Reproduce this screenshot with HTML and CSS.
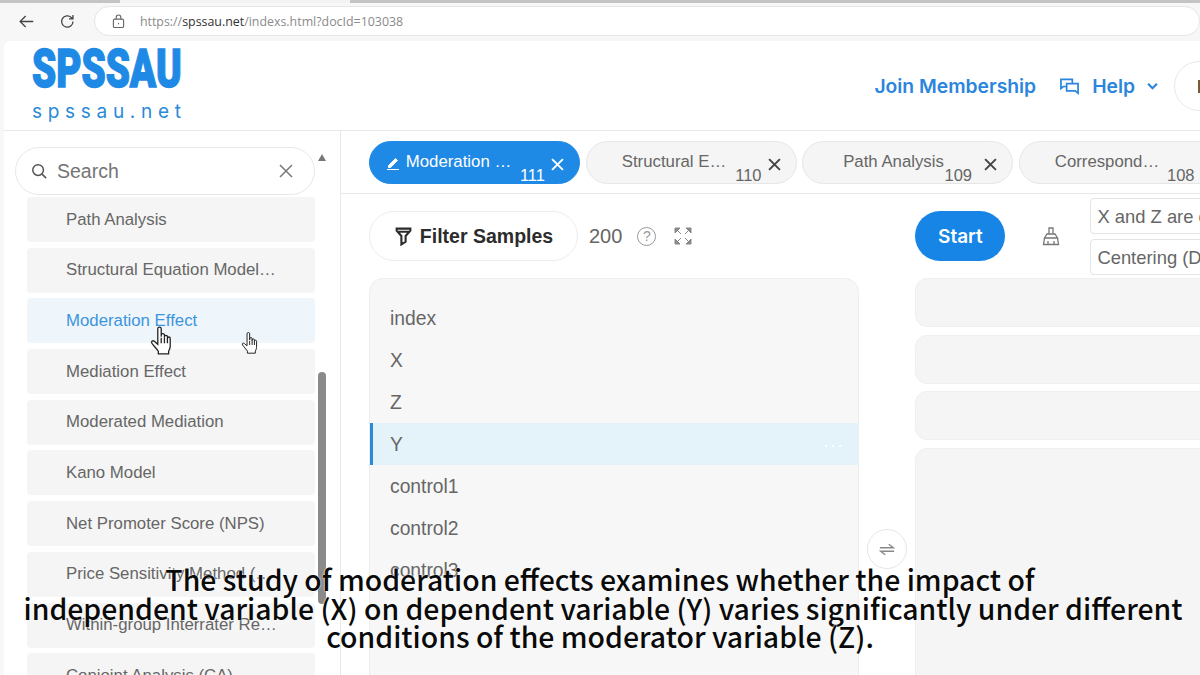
FILE: index.html
```html
<!DOCTYPE html>
<html lang="en">
  <head>
    <meta charset="UTF-8" />
    <title>SPSSAU</title>
    <link rel="stylesheet" href="styles.css">
  </head>
  <body>
    <div class="screen">
      <div class="browser">
        <div class="tabstrip">
          <span class="tab-edge edge-left"></span>
          <span class="tab-edge edge-right"></span>
        </div>
        <div class="navbar">
          <svg class="nav-icon back" viewBox="0 0 20 20"><path d="M18 10H3M9 3.500 2.500 10 9 16.500"/></svg>
          <svg class="nav-icon reload" viewBox="0 0 20 20"><path d="M16.500 10a6.700 6.700 0 1 1-2-4.800L16.500 7M16.500 2.300V7h-4.700"/></svg>
          <div class="address">
            <svg class="lock" viewBox="0 0 14 16"><rect x="1.500" y="5.500" width="11" height="9" rx="1.500"/><path d="M4.500 5.500V3.500a2.500 2.500 0 0 1 5 0v2M7 9.500v1.500"/></svg>
            <span class="url">https://<b>spssau.net</b>/indexs.html?docId=103038</span>
          </div>
        </div>
      </div>

      <div class="page">
        <header class="header">
          <div class="logo">
            <div class="logo-main">SPSSAU</div>
            <div class="logo-sub">spssau.net</div>
          </div>
          <div class="header-links">
            <span class="join">Join Membership</span>
            <svg class="help-icon" viewBox="0 0 22 20"><path d="M14 7V2.500H2V12l2.500-2H8M8 7h12v10l-3-2.500H8z"/></svg>
            <span class="help">Help</span>
            <svg class="chev" viewBox="0 0 10 7"><path d="M1 1.500 5 5.500 9 1.500"/></svg>
            <span class="user-pill"><span class="user-mark"></span></span>
          </div>
        </header>

        <div class="body">
          <aside class="sidebar">
            <div class="search-row">
              <div class="search">
                <svg class="search-icon" viewBox="0 0 18 18"><circle cx="8" cy="8" r="6"/><path d="M12.500 12.500 17 17"/></svg>
                <span class="search-text">Search</span>
                <svg class="search-x" viewBox="0 0 14 14"><path d="M1 1 13 13M13 1 1 13"/></svg>
              </div>
              <span class="scroll-up"></span>
            </div>
            <div class="menu-wrap">
              <ul class="menu">
                <li>Path Analysis</li>
                <li>Structural Equation Model…</li>
                <li class="active">Moderation Effect</li>
                <li>Mediation Effect</li>
                <li>Moderated Mediation</li>
                <li>Kano Model</li>
                <li>Net Promoter Score (NPS)</li>
                <li>Price Sensitivity Method (…</li>
                <li>Within-group Interrater Re…</li>
                <li>Conjoint Analysis (CA)</li>
              </ul>
              <span class="scroll-thumb"></span>
              <svg class="hand hand-big" viewBox="0 0 20 28"><path d="M7 14V3.500a1.600 1.600 0 0 1 3.200 0V11l0-1.500a1.500 1.500 0 0 1 3 0V12l0-1a1.400 1.400 0 0 1 2.800 0v2l0-.5a1.300 1.300 0 0 1 2.600 0V20c0 2-1 3-1.500 4.500V27H7.500v-2.500C6 22 3 19.500 1.500 17c-1-1.700.8-3 2.200-1.800L7 18z"/><path d="M10.200 12v5M13.200 12v5M16 13v4"/></svg>
              <svg class="hand hand-small" viewBox="0 0 20 28"><path d="M7 14V3.500a1.600 1.600 0 0 1 3.200 0V11l0-1.500a1.500 1.500 0 0 1 3 0V12l0-1a1.400 1.400 0 0 1 2.800 0v2l0-.5a1.300 1.300 0 0 1 2.600 0V20c0 2-1 3-1.500 4.500V27H7.500v-2.500C6 22 3 19.500 1.500 17c-1-1.700.8-3 2.200-1.800L7 18z"/><path d="M10.200 12v5M13.200 12v5M16 13v4"/></svg>
            </div>
          </aside>

          <main class="main">
            <div class="tabs">
              <div class="tab current">
                <svg class="pen" viewBox="0 0 14 14"><path d="M2.500 9.500 9.500 2.500l2 2-7 7H2.500zM1 13.500h12"/></svg>
                <span class="tab-name">Moderation …</span>
                <span class="tab-num">111</span>
                <svg class="tab-x" viewBox="0 0 12 12"><path d="M1 1 11 11M11 1 1 11"/></svg>
              </div>
              <div class="tab">
                <span class="tab-name">Structural E…</span>
                <span class="tab-num">110</span>
                <svg class="tab-x" viewBox="0 0 12 12"><path d="M1 1 11 11M11 1 1 11"/></svg>
              </div>
              <div class="tab tab-path">
                <span class="tab-name">Path Analysis</span>
                <span class="tab-num">109</span>
                <svg class="tab-x" viewBox="0 0 12 12"><path d="M1 1 11 11M11 1 1 11"/></svg>
              </div>
              <div class="tab">
                <span class="tab-name">Correspond…</span>
                <span class="tab-num">108</span>
                <svg class="tab-x" viewBox="0 0 12 12"><path d="M1 1 11 11M11 1 1 11"/></svg>
              </div>
            </div>

            <div class="toolbar">
              <div class="filter-btn">
                <svg class="funnel" viewBox="0 0 16 18"><path d="M1.500 1.500h13v2L10 8.500V14l-4 2.500v-8L1.500 3.500zM2 4.500h12"/></svg>
                <span>Filter Samples</span>
              </div>
              <span class="count">200</span>
              <span class="question">?</span>
              <svg class="expand" viewBox="0 0 18 18"><path d="M1 1h5l-5 5zM17 1h-5l5 5zM1 17h5l-5-5zM17 17h-5l5-5z"/><path d="M3 3l4 4M15 3l-4 4M3 15l4-4M15 15l-4-4"/></svg>
              <div class="start-btn">Start</div>
              <svg class="brush" viewBox="0 0 18 20"><path d="M7 8V2h4v6M2.500 12 5 8h8l2.500 4zM2.500 12 1.500 18.500h15L15.500 12M6 18.500V15M12 18.500V15"/></svg>
              <div class="selects">
                <div class="select">X and Z are centered</div>
                <div class="select">Centering (Default)</div>
              </div>
            </div>

            <div class="work">
              <div class="vars">
                <div class="var">index</div>
                <div class="var">X</div>
                <div class="var">Z</div>
                <div class="var selected">Y<span class="dots">···</span></div>
                <div class="var">control1</div>
                <div class="var">control2</div>
                <div class="var">control3</div>
              </div>
              <div class="gutter">
                <span class="swap">
                  <svg viewBox="0 0 18 14"><path d="M1 5h15l-5-4M17 9H2l5 4"/></svg>
                </span>
              </div>
              <div class="slots">
                <div class="slot"></div>
                <div class="slot"></div>
                <div class="slot"></div>
                <div class="slot slot-big"></div>
              </div>
            </div>
          </main>
        </div>
      </div>

      <div class="caption">
        The study of moderation effects examines whether the impact of<br>
        <span class="caption-mid">independent variable (X) on dependent variable (Y) varies significantly under different</span><br>
        conditions of the moderator variable (Z).
      </div>
    </div>
  </body>
</html>
```

FILE: styles.css
```css
* {
  padding: 0;
  margin: 0;
  box-sizing: border-box;
}
html,
body {
  width: 1200px;
  height: 675px;
  overflow: hidden;
}
body {
  font-family: "Liberation Sans", Arial, sans-serif;
  color: #666;
  background-color: #f7f7f7;
}
.screen {
  position: relative;
  width: 1200px;
  height: 675px;
  overflow: hidden;
}

/* browser chrome */
.browser {
  height: 41px;
  background-color: #f7f7f7;
}
.tabstrip {
  display: flex;
  gap: 230px;
  height: 3px;
  background-color: #f3f3f3;
  overflow: hidden;
}
.tab-edge {
  display: block;
  flex-shrink: 0;
  height: 3px;
  background-color: #c4c4c4;
}
.edge-left {
  width: 120px;
}
.edge-right {
  width: 850px;
}
.navbar {
  display: flex;
  align-items: center;
  height: 36px;
  padding-left: 18px;
}
.nav-icon {
  width: 17px;
  height: 17px;
  fill: none;
  stroke: #444;
  stroke-width: 1.500;
}
.reload {
  margin-left: 24px;
}
.address {
  display: flex;
  align-items: center;
  width: 1110px;
  height: 30px;
  margin-left: 18px;
  padding-left: 17px;
  background-color: #fff;
  border: 1px solid #e6e6e6;
  border-radius: 15px;
}
.lock {
  width: 13px;
  height: 15px;
  fill: none;
  stroke: #666;
  stroke-width: 1.200;
}
.url {
  margin-left: 15px;
  font-family: "Open Sans", sans-serif;
  font-size: 12.400px;
  color: #8a8a8a;
}
.url b {
  font-weight: 400;
  color: #333;
}

/* page card */
.page {
  margin-left: 4px;
  height: 634px;
  background-color: #fff;
  border-radius: 6px 0 0 0;
}
.header {
  display: flex;
  justify-content: space-between;
  height: 90px;
  border-bottom: 1px solid #e8e8e8;
}
.logo {
  width: 180px;
  padding: 6px 0 0 28px;
  color: #1f8ae6;
}
.logo-main {
  width: 151px;
  height: 44px;
  font-family: Roboto, sans-serif;
  font-weight: 900;
  font-size: 53px;
  line-height: 44px;
  -webkit-text-stroke: 1.500px #1f8ae6;
  transform: scaleX(0.73);
  transform-origin: left center;
  white-space: nowrap;
}
.logo-sub {
  margin-top: 9px;
  font-family: Inter, sans-serif;
  font-size: 19px;
  line-height: 24px;
  letter-spacing: 5.700px;
  color: #2a8ad8;
}
.header-links {
  display: flex;
  align-items: center;
  height: 90px;
  color: #2a86dc;
  font-family: Inter, sans-serif;
  font-weight: 600;
  font-size: 19.300px;
}
.help-icon {
  width: 21px;
  height: 19px;
  margin-left: 23px;
  fill: none;
  stroke: #2a86dc;
  stroke-width: 1.800;
}
.help {
  margin-left: 12px;
}
.chev {
  width: 11px;
  height: 8px;
  margin-left: 12px;
  fill: none;
  stroke: #2a86dc;
  stroke-width: 2;
}
.user-pill {
  display: flex;
  align-items: center;
  width: 60px;
  height: 50px;
  margin-left: 16px;
  margin-right: -34px;
  padding-left: 23px;
  border: 1px solid #e8e8e8;
  border-radius: 25px;
}
.user-mark {
  display: block;
  width: 4px;
  height: 13px;
  background-color: #7a5a3a;
}

.body {
  display: flex;
  height: 544px;
}

/* sidebar */
.sidebar {
  width: 337px;
  flex-shrink: 0;
  border-right: 1px solid #e8e8e8;
  overflow: hidden;
}
.search-row {
  display: flex;
  padding: 16px 0 0 11px;
}
.search {
  display: flex;
  align-items: center;
  width: 300px;
  height: 48px;
  padding: 0 21px 0 15px;
  border: 1px solid #e8e8e8;
  border-radius: 24px;
  background-color: #fff;
}
.search-icon {
  width: 16px;
  height: 16px;
  fill: none;
  stroke: #555;
  stroke-width: 1.700;
}
.search-text {
  flex: 1;
  margin-left: 10px;
  font-size: 19.500px;
  color: #757575;
}
.search-x {
  width: 14px;
  height: 14px;
  fill: none;
  stroke: #777;
  stroke-width: 1.500;
}
.scroll-up {
  display: block;
  width: 0;
  height: 0;
  margin: 7px 0 0 3px;
  border-left: 4.500px solid transparent;
  border-right: 4.500px solid transparent;
  border-bottom: 7px solid #777;
}
.menu-wrap {
  position: relative;
  height: 480px;
  overflow: hidden;
  padding: 2px 0 0 23px;
}
.menu {
  list-style: none;
  width: 288px;
}
.menu li {
  display: flex;
  align-items: center;
  height: 45px;
  margin-bottom: 5.700px;
  padding-left: 39px;
  font-size: 16.800px;
  color: #666;
  background-color: #f5f5f5;
  border-radius: 4px;
  white-space: nowrap;
}
.menu li.active {
  color: #3d94dc;
  background-color: #eef6fc;
}
.scroll-thumb {
  position: absolute;
  left: 314px;
  top: 177px;
  width: 8px;
  height: 232px;
  background-color: #8a8a8a;
  border-radius: 4px;
}
.hand {
  position: absolute;
  fill: #fff;
  stroke: #222;
  stroke-width: 1.200;
}
.hand-big {
  left: 146px;
  top: 130px;
  width: 22px;
  height: 30px;
}
.hand-small {
  left: 237px;
  top: 136px;
  width: 17px;
  height: 23px;
}

/* main */
.main {
  flex: 1;
  min-width: 0;
  overflow: hidden;
}
.tabs {
  display: flex;
  gap: 5.500px;
  width: 900px;
  height: 63px;
  padding: 10px 0 0 28px;
  border-bottom: 1px solid #e8e8e8;
}
.tab {
  position: relative;
  flex-shrink: 0;
  width: 211px;
  height: 43px;
  padding-top: 10px;
  text-align: center;
  font-size: 16.800px;
  color: #666;
  background-color: #f5f5f5;
  border: 1px solid #e6e6e6;
  border-radius: 22px;
}
.tab.current {
  color: #fff;
  background-color: #1f8ae6;
  border-color: #1f8ae6;
}
.tab-name {
  display: inline-block;
  margin-right: 34px;
}
.current .tab-name {
  margin-right: 32px;
}
.tab-path .tab-name {
  margin-right: 28px;
}
.tab-num {
  position: absolute;
  right: 34px;
  bottom: -2px;
  font-size: 16.500px;
}
.tab-path .tab-num {
  right: 40px;
}
.tab-x {
  position: absolute;
  right: 15px;
  top: 16px;
  width: 13px;
  height: 13px;
  fill: none;
  stroke: #444;
  stroke-width: 1.800;
}
.current .tab-x {
  stroke: #fff;
}
.pen {
  position: absolute;
  left: 16px;
  top: 14px;
  width: 14px;
  height: 14px;
  fill: #fff;
  stroke: #fff;
  stroke-width: 1;
}

.toolbar {
  display: flex;
  align-items: center;
  width: 900px;
  height: 84px;
  padding-left: 28px;
}
.filter-btn {
  display: flex;
  align-items: center;
  justify-content: center;
  gap: 8px;
  width: 209px;
  height: 50px;
  padding-left: 1px;
  font-size: 19.500px;
  font-weight: 700;
  color: #2c2c2c;
  border: 1px solid #ececec;
  border-radius: 25px;
  background-color: #fff;
}
.funnel {
  width: 17px;
  height: 19px;
  fill: none;
  stroke: #2c2c2c;
  stroke-width: 2;
}
.count {
  margin-left: 11px;
  font-size: 20px;
}
.question {
  display: flex;
  align-items: center;
  justify-content: center;
  width: 19px;
  height: 19px;
  margin-left: 15px;
  font-size: 14px;
  color: #999;
  border: 1.500px solid #999;
  border-radius: 50%;
}
.expand {
  width: 18px;
  height: 18px;
  margin-left: 18px;
  fill: #888;
  stroke: #888;
  stroke-width: 1;
}
.start-btn {
  display: flex;
  align-items: center;
  justify-content: center;
  width: 90px;
  height: 50px;
  margin-left: 223px;
  font-family: Inter, sans-serif;
  font-size: 19px;
  font-weight: 600;
  color: #fff;
  background-color: #1685e6;
  border-radius: 25px;
}
.brush {
  width: 18px;
  height: 20px;
  margin-left: 37px;
  fill: none;
  stroke: #777;
  stroke-width: 1.300;
}
.selects {
  display: flex;
  flex-direction: column;
  gap: 5px;
  margin-left: 30px;
}
.select {
  width: 120px;
  height: 36px;
  padding: 7px 0 0 6px;
  font-size: 18.400px;
  color: #666;
  white-space: nowrap;
  overflow: hidden;
  border: 1px solid #e4e4e4;
  border-radius: 4px;
  background-color: #fff;
}

.work {
  display: flex;
  width: 900px;
  padding-left: 28px;
}
.vars {
  width: 490px;
  height: 420px;
  flex-shrink: 0;
  padding-top: 18px;
  background-color: #f7f7f7;
  border: 1px solid #eee;
  border-radius: 14px 14px 0 0;
  overflow: hidden;
}
.var {
  display: flex;
  align-items: center;
  justify-content: space-between;
  height: 42px;
  padding: 2px 14px 0 20px;
  font-size: 19.300px;
  color: #666;
}
.var.selected {
  background-color: #e4f2fa;
  border-left: 3px solid #2a8ad8;
  padding-left: 17px;
}
.dots {
  font-size: 18px;
  color: #fff;
  letter-spacing: 1px;
}
.gutter {
  width: 56px;
  flex-shrink: 0;
  padding: 251px 0 0 8px;
}
.swap {
  display: flex;
  align-items: center;
  justify-content: center;
  width: 40px;
  height: 40px;
  background-color: #fff;
  border: 1px solid #e6e6e6;
  border-radius: 50%;
}
.swap svg {
  width: 16px;
  height: 13px;
  fill: none;
  stroke: #888;
  stroke-width: 1.500;
}
.slots {
  display: flex;
  flex-direction: column;
  gap: 7.500px;
  width: 320px;
  flex-shrink: 0;
}
.slot {
  height: 49px;
  background-color: #f5f5f5;
  border: 1px solid #efefef;
  border-radius: 12px;
}
.slot-big {
  height: 300px;
}

/* subtitle burned over the page */
.caption {
  position: absolute;
  left: 0;
  top: 565px;
  width: 1200px;
  text-align: center;
  font-family: "Noto Sans CJK SC", "Noto Sans", sans-serif;
  font-size: 28.400px;
  font-weight: 500;
  line-height: 28.500px;
  color: #0a0a0a;
  white-space: nowrap;
  text-shadow: 0 0 2px #fff, 0 0 1px #fff;
}
.caption-mid {
  padding-left: 6px;
}
```
